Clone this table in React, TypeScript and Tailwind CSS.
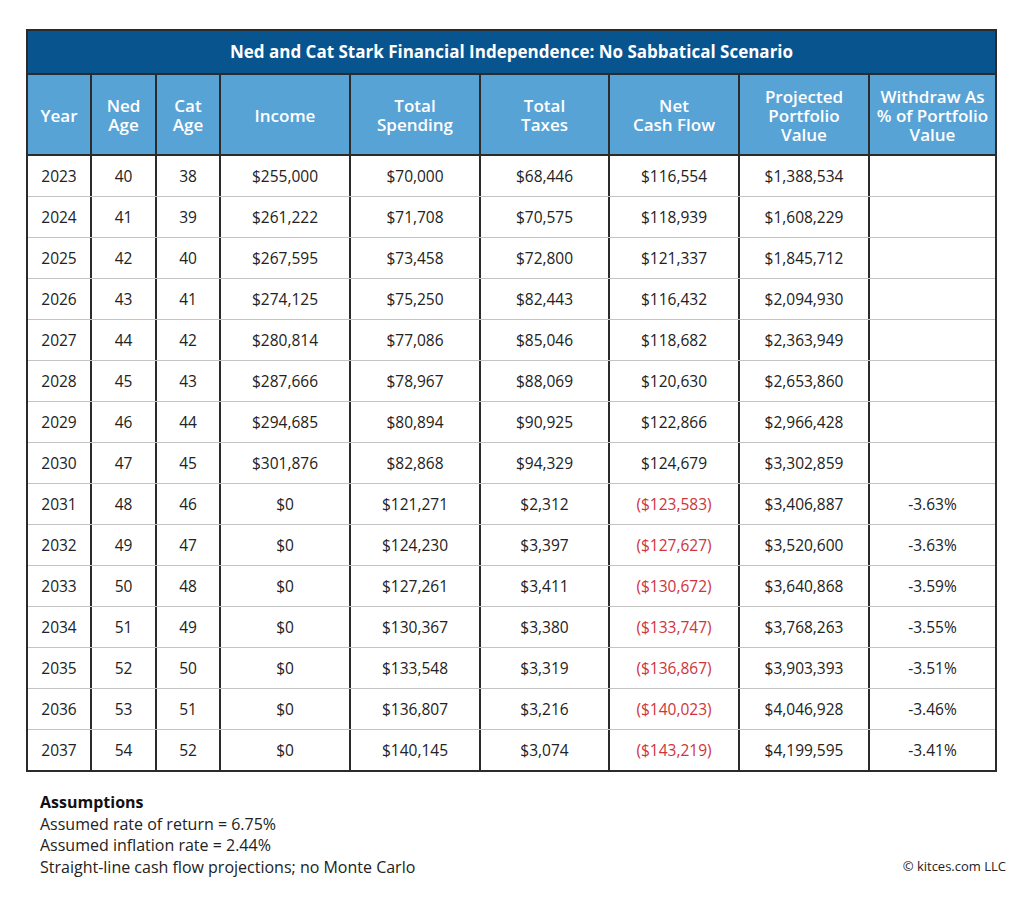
import React from "react";

const rows: [string, string, string, string, string, string, string, string, string][] = [
  ["2023", "40", "38", "$255,000", "$70,000", "$68,446", "$116,554", "$1,388,534", ""],
  ["2024", "41", "39", "$261,222", "$71,708", "$70,575", "$118,939", "$1,608,229", ""],
  ["2025", "42", "40", "$267,595", "$73,458", "$72,800", "$121,337", "$1,845,712", ""],
  ["2026", "43", "41", "$274,125", "$75,250", "$82,443", "$116,432", "$2,094,930", ""],
  ["2027", "44", "42", "$280,814", "$77,086", "$85,046", "$118,682", "$2,363,949", ""],
  ["2028", "45", "43", "$287,666", "$78,967", "$88,069", "$120,630", "$2,653,860", ""],
  ["2029", "46", "44", "$294,685", "$80,894", "$90,925", "$122,866", "$2,966,428", ""],
  ["2030", "47", "45", "$301,876", "$82,868", "$94,329", "$124,679", "$3,302,859", ""],
  ["2031", "48", "46", "$0", "$121,271", "$2,312", "($123,583)", "$3,406,887", "-3.63%"],
  ["2032", "49", "47", "$0", "$124,230", "$3,397", "($127,627)", "$3,520,600", "-3.63%"],
  ["2033", "50", "48", "$0", "$127,261", "$3,411", "($130,672)", "$3,640,868", "-3.59%"],
  ["2034", "51", "49", "$0", "$130,367", "$3,380", "($133,747)", "$3,768,263", "-3.55%"],
  ["2035", "52", "50", "$0", "$133,548", "$3,319", "($136,867)", "$3,903,393", "-3.51%"],
  ["2036", "53", "51", "$0", "$136,807", "$3,216", "($140,023)", "$4,046,928", "-3.46%"],
  ["2037", "54", "52", "$0", "$140,145", "$3,074", "($143,219)", "$4,199,595", "-3.41%"],
];

const headers: string[][] = [
  ["Year"],
  ["Ned", "Age"],
  ["Cat", "Age"],
  ["Income"],
  ["Total", "Spending"],
  ["Total", "Taxes"],
  ["Net", "Cash Flow"],
  ["Projected", "Portfolio", "Value"],
  ["Withdraw As", "% of Portfolio", "Value"],
];

const grid =
  "grid grid-cols-[62px_65px_64px_130px_130px_129px_130px_130px_127px]";

export default function App() {
  return (
    <div
      className="w-[1024px] h-[897px] bg-white relative text-[#222]"
      style={{ fontFamily: '"Open Sans", "Liberation Sans", sans-serif' }}
    >
      <div className="pt-[29px] pl-[26px]">
        <div className="w-[971px] border-2 border-[#2b2b2b]">
          <div className="h-[44px] bg-[#07548f] border-b-2 border-[#2b2b2b] flex items-center justify-center text-white font-bold text-[17px]">
            Ned and Cat Stark Financial Independence: No Sabbatical Scenario
          </div>
          <div className={`${grid} h-[81px] bg-[#58a3d6] border-b-2 border-[#2b2b2b]`}>
            {headers.map((h, i) => (
              <div
                key={i}
                className={`flex flex-col items-center justify-center pt-[1px] text-white font-semibold text-[17px] leading-[19px] text-center ${
                  i > 0 ? "border-l-2 border-[#2b2b2b]" : ""
                }`}
              >
                {h.map((l, j) => (
                  <span key={j} className="block whitespace-nowrap">
                    {l}
                  </span>
                ))}
              </div>
            ))}
          </div>
          {rows.map((r, ri) => (
            <div
              key={ri}
              className={`${grid} ${ri > 0 ? "h-[41px] border-t border-[#c4c4c4]" : "h-[40px]"}`}
            >
              {r.map((c, ci) => (
                <div
                  key={ci}
                  className={`flex items-center justify-center text-[15.5px] pt-[1px] ${
                    ci > 0 ? "border-l-2 border-[#2b2b2b]" : ""
                  } ${ci === 6 && c.startsWith("(") ? "text-[#d0343a]" : ""}`}
                >
                  {c}
                </div>
              ))}
            </div>
          ))}
        </div>
      </div>
      <div className="pl-[40px] pt-[20px] text-[16px] leading-[21.7px]">
        <div className="font-bold text-[#111]">Assumptions</div>
        <div>Assumed rate of return = 6.75%</div>
        <div>Assumed inflation rate = 2.44%</div>
        <div>Straight-line cash flow projections; no Monte Carlo</div>
      </div>
      <div className="absolute right-[18px] top-[857px] text-[13px]">© kitces.com LLC</div>
    </div>
  );
}
